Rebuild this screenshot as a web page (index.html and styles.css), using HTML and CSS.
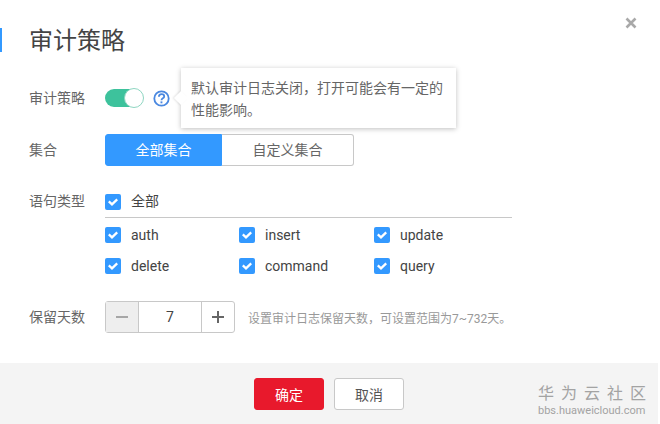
FILE: index.html
```html
<!DOCTYPE html>
<html lang="zh-CN">
<head>
    <meta charset="UTF-8">
    <title>审计策略</title>
    <link rel="stylesheet" href="styles.css">
</head>
<body>
    <div class="dialog">
        <div class="dialog-head">
            <h1 class="dialog-title">审计策略</h1>
            <svg class="close-icon" width="12" height="12" viewBox="0 0 12 12">
                <path d="M1.5 1.5l9 9M10.5 1.5l-9 9" stroke="#a9a9a9" stroke-width="2.6" fill="none"/>
            </svg>
        </div>

        <div class="dialog-body">
            <div class="form-row row-policy">
                <div class="form-label">审计策略</div>
                <div class="switch"><span class="switch-knob"></span></div>
                <svg class="help-icon" width="17" height="17" viewBox="0 0 17 17">
                    <circle cx="8.5" cy="8.5" r="7.2" fill="none" stroke="#4a88e0" stroke-width="1.8"/>
                    <path d="M5.9 6.8c0-1.6 1.1-2.6 2.7-2.6s2.6.9 2.6 2.2c0 2-2.7 1.8-2.7 3.8" fill="none" stroke="#4a88e0" stroke-width="1.8"/>
                    <rect x="7.5" y="11.4" width="1.9" height="1.9" fill="#4a88e0"/>
                </svg>
                <div class="tooltip">默认审计日志关闭，打开可能会有一定的性能影响。</div>
            </div>

            <div class="form-row row-set">
                <div class="form-label">集合</div>
                <div class="segment">
                    <div class="segment-item active">全部集合</div>
                    <div class="segment-item">自定义集合</div>
                </div>
            </div>

            <div class="form-row row-types">
                <div class="form-label">语句类型</div>
                <div class="check-area">
                    <div class="check-all">
                        <label class="check"><span class="check-box"><svg width="10" height="8" viewBox="0 0 10 8"><path d="M.8 3.4l3.2 3L9.2 1.4" fill="none" stroke="#fff" stroke-width="2.3"/></svg></span><span class="check-all-text">全部</span></label>
                    </div>
                    <div class="check-grid">
                        <label class="check"><span class="check-box"><svg width="10" height="8" viewBox="0 0 10 8"><path d="M.8 3.4l3.2 3L9.2 1.4" fill="none" stroke="#fff" stroke-width="2.3"/></svg></span>auth</label>
                        <label class="check"><span class="check-box"><svg width="10" height="8" viewBox="0 0 10 8"><path d="M.8 3.4l3.2 3L9.2 1.4" fill="none" stroke="#fff" stroke-width="2.3"/></svg></span>insert</label>
                        <label class="check"><span class="check-box"><svg width="10" height="8" viewBox="0 0 10 8"><path d="M.8 3.4l3.2 3L9.2 1.4" fill="none" stroke="#fff" stroke-width="2.3"/></svg></span>update</label>
                        <label class="check"><span class="check-box"><svg width="10" height="8" viewBox="0 0 10 8"><path d="M.8 3.4l3.2 3L9.2 1.4" fill="none" stroke="#fff" stroke-width="2.3"/></svg></span>delete</label>
                        <label class="check"><span class="check-box"><svg width="10" height="8" viewBox="0 0 10 8"><path d="M.8 3.4l3.2 3L9.2 1.4" fill="none" stroke="#fff" stroke-width="2.3"/></svg></span>command</label>
                        <label class="check"><span class="check-box"><svg width="10" height="8" viewBox="0 0 10 8"><path d="M.8 3.4l3.2 3L9.2 1.4" fill="none" stroke="#fff" stroke-width="2.3"/></svg></span>query</label>
                    </div>
                </div>
            </div>

            <div class="form-row row-days">
                <div class="form-label">保留天数</div>
                <div class="stepper">
                    <div class="stepper-btn minus">
                        <svg width="12" height="12" viewBox="0 0 12 12"><path d="M0 6h12" stroke="#a6a6a6" stroke-width="2"/></svg>
                    </div>
                    <div class="stepper-value">7</div>
                    <div class="stepper-btn">
                        <svg width="12" height="12" viewBox="0 0 12 12"><path d="M0 6h12M6 0v12" stroke="#666" stroke-width="2"/></svg>
                    </div>
                </div>
                <div class="hint">设置审计日志保留天数，可设置范围为7~732天。</div>
            </div>
        </div>

        <div class="dialog-foot">
            <button class="btn btn-primary">确定</button>
            <button class="btn">取消</button>
            <div class="watermark">
                <div class="watermark-name">华为云社区</div>
                <div class="watermark-url">bbs.huaweicloud.com</div>
            </div>
        </div>
    </div>
</body>
</html>
```

FILE: styles.css
```css
body {
    font-family: "Noto Sans CJK SC", "Roboto", sans-serif;
    margin: 0;
    padding: 0;
    color: #555;
    background-color: #fff;
    overflow: hidden;
}

.dialog {
    width: 658px;
    height: 424px;
    display: flex;
    flex-direction: column;
    position: relative;
    font-family: "Roboto", "Noto Sans CJK SC", sans-serif;
    font-size: 14px;
}

.dialog-head {
    height: 64px;
    padding-top: 28px;
    box-sizing: border-box;
}

.dialog-title {
    margin: 0;
    height: 24px;
    line-height: 26px;
    font-size: 24px;
    font-weight: 400;
    color: #444;
    padding-left: 27px;
    border-left: 2px solid #3399ff;
}

.close-icon {
    position: absolute;
    top: 17px;
    left: 625px;
}

.dialog-body {
    flex: 1;
    padding-left: 29px;
}

.form-row {
    display: flex;
    align-items: center;
}

.form-label {
    width: 76px;
    flex: none;
    color: #666;
}

.row-policy {
    position: relative;
    margin-top: 24px;
    height: 20px;
}

.row-policy .form-label {
    margin-top: -2px;
}

.switch {
    width: 38px;
    height: 18px;
    background-color: #3dc29c;
    border-radius: 10px;
    position: relative;
}

.switch-knob {
    position: absolute;
    right: -1px;
    top: -1px;
    width: 18px;
    height: 18px;
    background-color: #fff;
    border: 1px solid #8fd6c2;
    border-radius: 50%;
}

.help-icon {
    margin-left: 10px;
}

.tooltip {
    position: absolute;
    left: 152px;
    top: -20px;
    width: 275px;
    height: 60px;
    box-sizing: border-box;
    padding: 9px 10px;
    line-height: 22px;
    font-size: 14px;
    color: #666;
    background-color: #fff;
    box-shadow: 0 1px 5px rgba(0, 0, 0, 0.25);
}

.tooltip::before {
    content: "";
    position: absolute;
    left: -5px;
    top: 25px;
    width: 10px;
    height: 10px;
    background-color: #fff;
    transform: rotate(45deg);
    box-shadow: -1px 1px 2px rgba(0, 0, 0, 0.1);
}

.row-set {
    margin-top: 26px;
}

.row-set .form-label {
    margin-top: -2px;
}

.segment {
    display: flex;
    height: 32px;
}

.segment-item {
    width: 132px;
    box-sizing: border-box;
    border: 1px solid #c8c8c8;
    border-left: none;
    border-radius: 0 3px 3px 0;
    line-height: 30px;
    text-align: center;
    font-size: 14px;
    color: #666;
}

.segment-item.active {
    width: 117px;
    border: 1px solid #3399ff;
    border-radius: 3px 0 0 3px;
    background-color: #3399ff;
    color: #fff;
}

.row-types {
    margin-top: 26px;
    align-items: flex-start;
}

.row-types .form-label {
    height: 20px;
    line-height: 18px;
}

.check-area {
    width: 407px;
}

.check-all {
    height: 25px;
    border-bottom: 1px solid #c8c8c8;
    margin-bottom: 7px;
}

.check-all-text {
    line-height: 18px;
    margin-bottom: 2px;
}

.check {
    display: flex;
    align-items: center;
    height: 20px;
    color: #444;
}

.check-box {
    width: 16px;
    height: 16px;
    margin-right: 10px;
    flex: none;
    background-color: #3399ff;
    border-radius: 2px;
    display: flex;
    align-items: center;
    justify-content: center;
}

.check-grid {
    display: grid;
    grid-template-columns: 134px 135px 1fr;
    row-gap: 11px;
}

.row-days {
    margin-top: 25px;
}

.row-days .form-label {
    margin-top: -2px;
}

.stepper {
    display: flex;
    width: 130px;
    height: 32px;
    box-sizing: border-box;
    border: 1px solid #c8c8c8;
    border-radius: 3px;
}

.stepper-btn {
    width: 32px;
    display: flex;
    align-items: center;
    justify-content: center;
}

.stepper-btn.minus {
    background-color: #eee;
}

.stepper-value {
    flex: 1;
    border-left: 1px solid #c8c8c8;
    border-right: 1px solid #c8c8c8;
    line-height: 30px;
    text-align: center;
    color: #444;
}

.hint {
    margin-left: 13px;
    font-size: 12px;
    color: #999;
}

.dialog-foot {
    height: 61px;
    background-color: #f4f4f4;
    display: flex;
    justify-content: center;
    align-items: center;
    gap: 10px;
    position: relative;
}

.btn {
    width: 70px;
    height: 32px;
    padding: 0;
    font-family: inherit;
    font-size: 14px;
    color: #555;
    background-color: #fff;
    border: 1px solid #c8c8c8;
    border-radius: 3px;
}

.btn-primary {
    color: #fff;
    background-color: #e8192c;
    border-color: #e8192c;
}

.watermark {
    position: absolute;
    left: 538px;
    top: 21px;
    width: 112px;
    color: #a3a3a3;
}

.watermark-name {
    font-size: 16px;
    line-height: 20px;
    letter-spacing: 7px;
    white-space: nowrap;
}

.watermark-url {
    font-size: 11px;
    line-height: 13px;
    white-space: nowrap;
}
```
